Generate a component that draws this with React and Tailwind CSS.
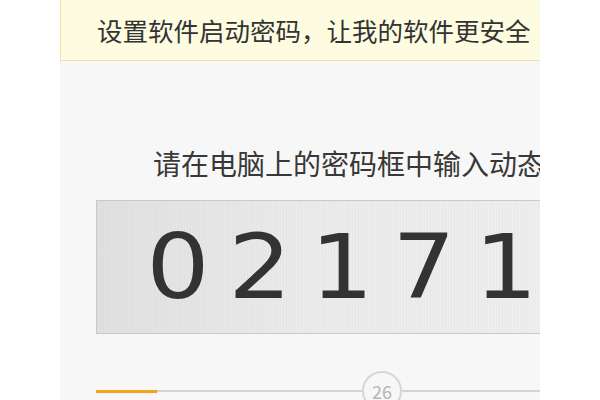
export default function App() {
  const digits = ["0", "2", "1", "7", "1"];
  return (
    <div className="w-[600px] h-[400px] bg-white overflow-hidden">
      <div
        className="ml-[60px] w-[480px] h-full overflow-hidden bg-[#f7f7f7] flex flex-col"
        style={{ fontFamily: '"Noto Sans CJK SC", "Noto Sans", sans-serif' }}
      >
        <div className="h-[61px] shrink-0 bg-[#fdfce0] border-b border-l border-[#ede3a6] flex items-center pl-[36px] whitespace-nowrap text-[25.5px] text-[#333333]">
          设置软件启动密码，让我的软件更安全
        </div>
        <div className="shrink-0 pt-[82px] pl-[93px] whitespace-nowrap text-[28px] leading-[40px] text-[#383838]">
          请在电脑上的密码框中输入动态密码
        </div>
        <div className="shrink-0 mt-[17px] ml-[36px] w-[520px] h-[134px] border border-[#c9c9c9] bg-[repeating-linear-gradient(90deg,rgba(0,0,0,0.018)_0px,rgba(0,0,0,0.018)_1px,transparent_1px,transparent_3px),linear-gradient(90deg,#e0e0e0,#ebebeb_40%,#efefef)] flex items-center pl-[40px]">
          {digits.map((d, i) => (
            <span
              key={i}
              className="w-[82px] shrink-0 text-center text-[89px] leading-none text-[#333333] scale-x-[1.12]"
              style={{ fontFamily: '"DejaVu Sans", sans-serif' }}
            >
              {d}
            </span>
          ))}
        </div>
        <div className="shrink-0 mt-[37px] ml-[36px] w-[520px] h-[40px] flex items-center">
          <div className="w-[61px] h-[3px] bg-[#f5a11c] shrink-0" />
          <div className="w-[205px] h-[2px] bg-[#d4d4d4] shrink-0" />
          <div className="w-[40px] h-[40px] shrink-0 rounded-full border-2 border-[#d6d6d6] flex items-center justify-center text-[18px] text-[#b5b5b5]">
            26
          </div>
          <div className="flex-1 h-[2px] bg-[#d4d4d4]" />
        </div>
      </div>
    </div>
  );
}
